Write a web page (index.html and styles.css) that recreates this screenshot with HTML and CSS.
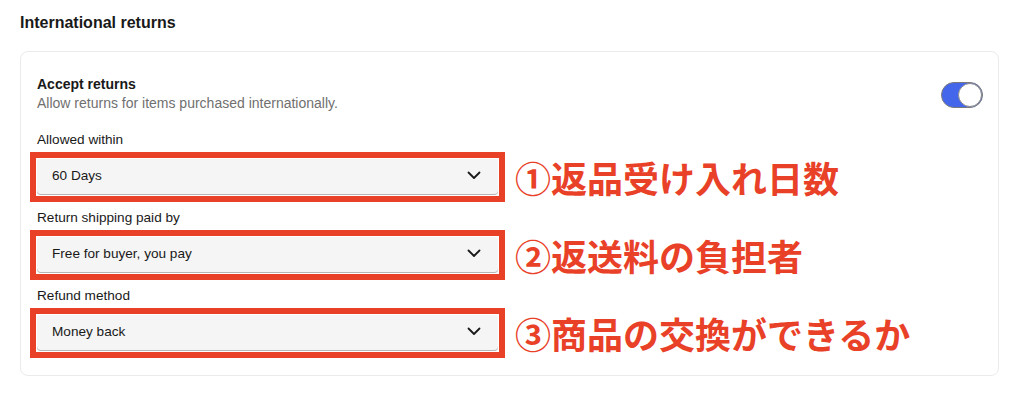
FILE: index.html
```html
<!DOCTYPE html>
<html lang="ja">
<head>
    <meta charset="UTF-8">
    <meta name="viewport" content="width=device-width, initial-scale=1.0">
    <title>International returns</title>
    <link rel="stylesheet" href="styles.css">
</head>
<body>
    <h2 class="section-title">International returns</h2>
    <div class="card">
        <div class="card-head">
            <div>
                <div class="head-title">Accept returns</div>
                <div class="head-sub">Allow returns for items purchased internationally.</div>
            </div>
            <div class="toggle"><span class="knob"></span></div>
        </div>

        <div class="field">
            <div class="field-label">Allowed within</div>
            <div class="field-row">
                <div class="marker">
                    <div class="select">
                        <span>60 Days</span>
                        <svg width="14" height="9" viewBox="0 0 14 9"><path d="M1.5 1.5 L7 7 L12.5 1.5" fill="none" stroke="#1a1a1a" stroke-width="1.8" stroke-linecap="round" stroke-linejoin="round"/></svg>
                    </div>
                </div>
                <div class="note">①返品受け入れ日数</div>
            </div>
        </div>

        <div class="field">
            <div class="field-label">Return shipping paid by</div>
            <div class="field-row">
                <div class="marker">
                    <div class="select">
                        <span>Free for buyer, you pay</span>
                        <svg width="14" height="9" viewBox="0 0 14 9"><path d="M1.5 1.5 L7 7 L12.5 1.5" fill="none" stroke="#1a1a1a" stroke-width="1.8" stroke-linecap="round" stroke-linejoin="round"/></svg>
                    </div>
                </div>
                <div class="note">②返送料の負担者</div>
            </div>
        </div>

        <div class="field">
            <div class="field-label">Refund method</div>
            <div class="field-row">
                <div class="marker">
                    <div class="select">
                        <span>Money back</span>
                        <svg width="14" height="9" viewBox="0 0 14 9"><path d="M1.5 1.5 L7 7 L12.5 1.5" fill="none" stroke="#1a1a1a" stroke-width="1.8" stroke-linecap="round" stroke-linejoin="round"/></svg>
                    </div>
                </div>
                <div class="note">③商品の交換ができるか</div>
            </div>
        </div>
    </div>
</body>
</html>
```

FILE: styles.css
```css
body {
    margin: 0;
    padding: 14px 25px 0 20px;
    font-family: "Liberation Sans", Arial, sans-serif;
    color: #191919;
    background-color: #fff;
}

.section-title {
    margin: 0 0 19px;
    font-size: 16px;
    line-height: 18px;
    font-weight: bold;
}

.card {
    border: 1px solid #ebebeb;
    border-radius: 8px;
    padding: 24px 15px 24px 16px;
}

.card-head {
    display: flex;
    justify-content: space-between;
    align-items: center;
    margin-bottom: 21px;
}

.head-title {
    font-size: 14px;
    line-height: 16px;
    font-weight: bold;
    margin-bottom: 3px;
}

.head-sub {
    font-size: 14px;
    line-height: 16px;
    color: #707070;
}

.toggle {
    width: 42px;
    height: 26px;
    box-sizing: border-box;
    border: 1px solid #7a7a7a;
    border-radius: 13px;
    background-color: #4466ea;
    display: flex;
    justify-content: flex-end;
    margin-top: 2px;
}

.knob {
    width: 24px;
    height: 24px;
    box-sizing: border-box;
    border-radius: 50%;
    border: 1px solid #8a8a8a;
    background-color: #fff;
}

.field {
    margin-bottom: 15px;
}

.field:last-child {
    margin-bottom: 0;
}

.field-label {
    font-size: 13.6px;
    line-height: 16px;
    margin-bottom: 11px;
}

.field-row {
    display: flex;
    align-items: center;
    gap: 17px;
}

.marker {
    margin: -7px;
    border: 6px solid #e94128;
    padding: 1px;
}

.select {
    width: 461px;
    height: 36px;
    box-sizing: border-box;
    background-color: #f5f5f5;
    border-radius: 4px;
    box-shadow: inset 0 -1px 0 #b5b5b5;
    padding: 0 17px 4px 15px;
    display: flex;
    justify-content: space-between;
    align-items: center;
    font-size: 13.6px;
}

.note {
    font-family: "Noto Sans CJK JP", sans-serif;
    font-size: 36px;
    font-weight: bold;
    line-height: 30px;
    color: #e94128;
    white-space: nowrap;
}
```
